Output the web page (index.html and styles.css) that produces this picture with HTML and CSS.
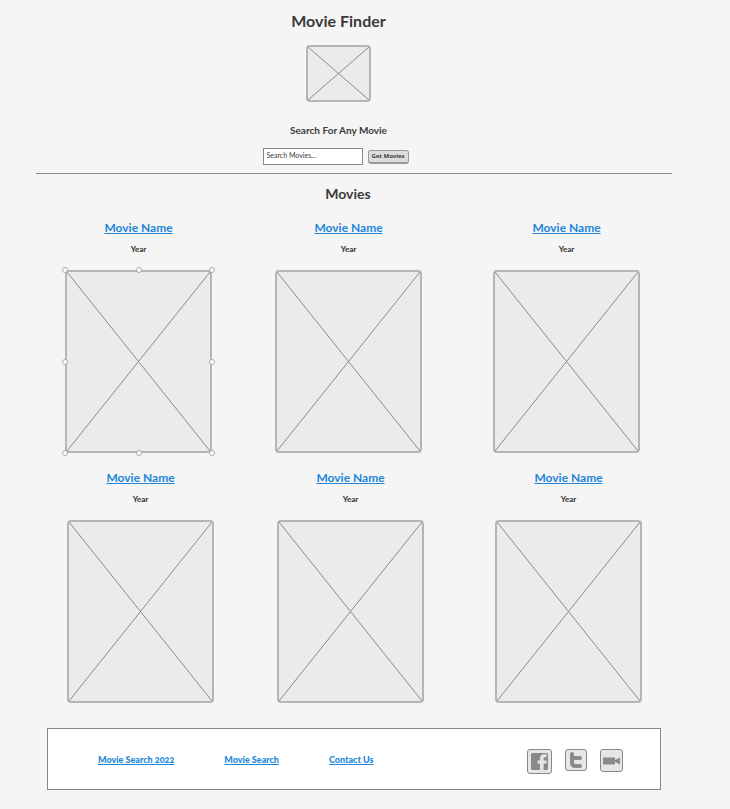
FILE: index.html
```html
<!DOCTYPE html>
<html lang="en">
<head>
<meta charset="utf-8">
<meta name="viewport" content="width=device-width, initial-scale=1">
<title>Movie Finder</title>
<link rel="stylesheet" href="styles.css">
</head>
<body>
<header class="header">
  <h1 class="title">Movie Finder</h1>
  <div class="placeholder logo"><svg viewBox="0 0 100 100" preserveAspectRatio="none" aria-hidden="true"><path d="M0 0L100 100M100 0L0 100"/></svg></div>
  <h2 class="subtitle"><label for="search">Search For Any Movie</label></h2>
  <form class="search">
    <input class="search-input" id="search" type="text" value="Search Movies...">
    <button class="search-button" type="button">Get Movies</button>
  </form>
</header>
<main class="main">
  <h2 class="section-title">Movies</h2>
  <div class="row">
    <article class="card">
      <a class="name" href="#">Movie Name</a>
      <p class="year">Year</p>
      <div class="placeholder poster selected"><svg viewBox="0 0 100 100" preserveAspectRatio="none" aria-hidden="true"><path d="M0 0L100 100M100 0L0 100"/></svg>
        <span class="handle top left"></span><span class="handle top center"></span><span class="handle top right"></span>
        <span class="handle middle left"></span><span class="handle middle right"></span>
        <span class="handle bottom left"></span><span class="handle bottom center"></span><span class="handle bottom right"></span>
      </div>
    </article>
    <article class="card">
      <a class="name" href="#">Movie Name</a>
      <p class="year">Year</p>
      <div class="placeholder poster"><svg viewBox="0 0 100 100" preserveAspectRatio="none" aria-hidden="true"><path d="M0 0L100 100M100 0L0 100"/></svg></div>
    </article>
    <article class="card">
      <a class="name" href="#">Movie Name</a>
      <p class="year">Year</p>
      <div class="placeholder poster"><svg viewBox="0 0 100 100" preserveAspectRatio="none" aria-hidden="true"><path d="M0 0L100 100M100 0L0 100"/></svg></div>
    </article>
  </div>
  <div class="row row-second">
    <article class="card">
      <a class="name" href="#">Movie Name</a>
      <p class="year">Year</p>
      <div class="placeholder poster"><svg viewBox="0 0 100 100" preserveAspectRatio="none" aria-hidden="true"><path d="M0 0L100 100M100 0L0 100"/></svg></div>
    </article>
    <article class="card">
      <a class="name" href="#">Movie Name</a>
      <p class="year">Year</p>
      <div class="placeholder poster"><svg viewBox="0 0 100 100" preserveAspectRatio="none" aria-hidden="true"><path d="M0 0L100 100M100 0L0 100"/></svg></div>
    </article>
    <article class="card">
      <a class="name" href="#">Movie Name</a>
      <p class="year">Year</p>
      <div class="placeholder poster"><svg viewBox="0 0 100 100" preserveAspectRatio="none" aria-hidden="true"><path d="M0 0L100 100M100 0L0 100"/></svg></div>
    </article>
  </div>
</main>
<footer class="footer">
  <nav class="links">
    <a href="#">Movie Search 2022</a>
    <a href="#">Movie Search</a>
    <a href="#">Contact Us</a>
  </nav>
  <div class="social">
    <a class="icon icon-large" href="#" aria-label="Facebook"><svg viewBox="0 0 17 17"><path fill="#8a8a8a" d="M1.5 0h14A1.5 1.5 0 0 1 17 1.5v14a1.5 1.5 0 0 1-1.5 1.5h-14A1.5 1.5 0 0 1 0 15.5v-14A1.5 1.5 0 0 1 1.5 0z"/><path fill="#e6e6e6" d="M9 17V10.500H6.700V7.500H9V5.600C9 2.700 10.500 1.200 13 1.200h2.500v3h-1.700c-.8 0-1.200.4-1.200 1.300v2h3v3h-3V17z"/></svg></a>
    <a class="icon icon-small" href="#" aria-label="Twitter"><svg viewBox="0 0 12 16"><path fill="none" stroke="#8a8a8a" stroke-width="4" stroke-linecap="round" stroke-linejoin="round" d="M2 2v8.500q0 3.500 3.500 3.500H10M2 6h8"/></svg></a>
    <a class="icon icon-medium" href="#" aria-label="Video"><svg viewBox="0 0 17 8"><path fill="#8a8a8a" d="M0 .5h12v2.500L17 .5v7L12 5v2.500H0z"/></svg></a>
  </div>
</footer>
</body>
</html>
```
FILE: styles.css
```css
* { box-sizing: border-box; }

body {
  margin: 0;
  padding: 9px 58px 19px 36px;
  background: #f5f5f5;
  color: #3b3b3b;
  font-family: Lato, sans-serif;
}

h1, h2, p { margin: 0; }

a { color: #2186d8; }

.header {
  display: flex;
  flex-direction: column;
  align-items: center;
  padding: 0 31px 8px 0;
  border-bottom: 1px solid #888;
}

.title { font-size: 16px; line-height: 24px; }

.placeholder {
  position: relative;
  border: 2px solid #b5b5b5;
  border-radius: 4px;
  background: #ebebeb;
}

.placeholder svg {
  display: block;
  width: 100%;
  height: 100%;
}

.placeholder path {
  fill: none;
  stroke: #8a8a8a;
  stroke-width: 1px;
  vector-effect: non-scaling-stroke;
}

.logo {
  width: 65px;
  height: 57px;
  margin-top: 12px;
}

.subtitle {
  margin-top: 18px;
  font-size: 10px;
  line-height: 20px;
}

.search {
  display: flex;
  align-items: center;
  gap: 5px;
  margin: 8px 6px 0 0;
}

.search-input {
  width: 100px;
  height: 17px;
  padding: 0 3px 3px;
  border: 1px solid #888;
  background: #fff;
  color: #3b3b3b;
  font: 7px Lato, sans-serif;
}

.search-button {
  height: 14px;
  width: 41px;
  padding: 0;
  border: 1px solid #999;
  border-bottom-width: 2px;
  border-radius: 3px;
  background: #dcdcdc;
  color: #3b3b3b;
  font: bold 6px "Noto Sans", sans-serif;
}

.section-title {
  margin: 8px 12px 13px 0;
  font-size: 14px;
  line-height: 24px;
  text-align: center;
}

.row {
  display: grid;
  grid-template-columns: 210fr 218fr 147fr;
  margin: 0 32px 0 29px;
}

.card:nth-child(1) { padding-right: 63px; }
.card:nth-child(2) { padding-right: 71px; }

.row-second { margin: 16px 30px 0 31px; }

.card { text-align: center; }

.name {
  display: block;
  font-size: 12px;
  font-weight: bold;
  line-height: 18px;
}

.year {
  margin: 5px 0 14px;
  font-size: 8px;
  font-weight: 900;
  line-height: 14px;
}

.poster { height: 183px; }

.selected { border-radius: 0; }

.handle {
  position: absolute;
  width: 6px;
  height: 6px;
  border: 1px solid #aaa;
  border-radius: 50%;
  background: #fff;
}

.top { top: -5px; }
.middle { top: calc(50% - 3px); }
.bottom { bottom: -5px; }
.left { left: -5px; }
.center { left: calc(50% - 3px); }
.right { right: -5px; }

.footer {
  display: flex;
  justify-content: space-between;
  margin: 25px 11px 0;
  padding: 20px 37px 15px 50px;
  border: 1px solid #888;
  background: #fff;
}

.links {
  display: flex;
  gap: 50px;
  font-size: 9px;
  font-weight: 900;
  font-variant-numeric: oldstyle-nums;
  line-height: 22px;
}

.social {
  display: flex;
  align-items: flex-start;
  gap: 13px;
}

.icon {
  display: flex;
  align-items: center;
  justify-content: center;
  border: 1px solid #888;
  border-radius: 3px;
  background: #e6e6e6;
}

.icon-large { width: 25px; height: 25px; }
.icon-large svg { width: 17px; }
.icon-small { width: 22px; height: 22px; }
.icon-small svg { width: 12px; }
.icon-medium { width: 23px; height: 23px; }
.icon-medium svg { width: 17px; }
```
